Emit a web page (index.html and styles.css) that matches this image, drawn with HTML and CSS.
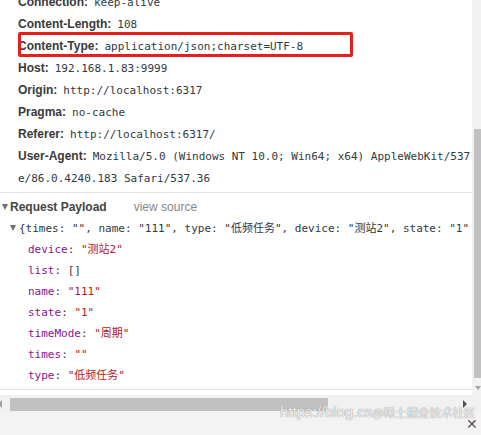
FILE: index.html
```html
<!DOCTYPE html>
<html lang="en">
<head>
  <meta charset="UTF-8" />
  <meta name="viewport" content="width=device-width, initial-scale=1.0" />
  <title>Request Headers</title>
  <link rel="stylesheet" href="styles.css">
</head>
<body>
  <div class="devtools">
    <div class="panel">
      <div class="body">
        <ul class="headers">
          <li><span class="name">Connection:</span><span class="value">keep-alive</span></li>
          <li><span class="name">Content-Length:</span><span class="value">108</span></li>
          <li class="marked"><span class="name">Content-Type:</span><span class="value">application/json;charset=UTF-8</span></li>
          <li><span class="name">Host:</span><span class="value">192.168.1.83:9999</span></li>
          <li><span class="name">Origin:</span><span class="value">http://localhost:6317</span></li>
          <li><span class="name">Pragma:</span><span class="value">no-cache</span></li>
          <li><span class="name">Referer:</span><span class="value">http://localhost:6317/</span></li>
          <li><span class="name">User-Agent:</span><span class="value">Mozilla/5.0 (Windows NT 10.0; Win64; x64) AppleWebKit/537.</span></li>
          <li class="wrap"><span class="value">e/86.0.4240.183 Safari/537.36</span></li>
        </ul>

        <div class="section-title">
          <span class="arrow"></span>
          <strong>Request Payload</strong>
          <span class="view-source">view source</span>
        </div>

        <div class="payload">
          <div class="preview"><span class="arrow small"></span>{times: "", name: "111", type: "低频任务", device: "测站2", state: "1"</div>
          <div class="prop"><span class="key">device</span>: <span class="str">"测站2"</span></div>
          <div class="prop"><span class="key">list</span>: []</div>
          <div class="prop"><span class="key">name</span>: <span class="str">"111"</span></div>
          <div class="prop"><span class="key">state</span>: <span class="str">"1"</span></div>
          <div class="prop"><span class="key">timeMode</span>: <span class="str">"周期"</span></div>
          <div class="prop"><span class="key">times</span>: <span class="str">""</span></div>
          <div class="prop"><span class="key">type</span>: <span class="str">"低频任务"</span></div>
        </div>
      </div>
      <div class="vscroll">
        <div class="vthumb"></div>
        <span class="down"></span>
      </div>
    </div>

    <div class="hscroll">
      <span class="left"></span>
      <div class="track"><div class="hthumb"></div></div>
      <span class="right"></span>
    </div>

    <div class="footer">
      <span class="close">✕</span>
    </div>

    <div class="watermark"><span class="url">https://blog.cs</span><span class="site">@稀土掘金技术社区</span></div>
  </div>
</body>
</html>
```

FILE: styles.css
```css
html, body {
  margin: 0;
  padding: 0;
  background: #fff;
}
.devtools {
  position: relative;
  width: 481px;
  height: 435px;
  overflow: hidden;
  font-family: "Liberation Sans", Arial, sans-serif;
  font-size: 12px;
  color: #333;
}
.panel {
  display: grid;
  grid-template-columns: 472px 9px;
  height: 395px;
}
.body {
  overflow: hidden;
  white-space: nowrap;
}
.headers {
  list-style: none;
  margin: -9px 0 0;
  padding: 0 0 3px 18px;
  border-bottom: 1px solid #e3e3e3;
}
.headers li {
  height: 22px;
  line-height: 22px;
}
.headers .name {
  font-weight: bold;
  margin-right: 6px;
  color: #3a3a3a;
}
.headers .value {
  font-family: "DejaVu Sans Mono", "Liberation Mono", "Noto Sans CJK SC", monospace;
  font-size: 11px;
  color: #303942;
}
.marked {
  position: relative;
}
.marked::after {
  content: "";
  position: absolute;
  left: 0;
  top: -3px;
  width: 329px;
  height: 19px;
  border: 3px solid #e5201b;
  border-radius: 2px;
}
.section-title {
  height: 22px;
  line-height: 22px;
  padding-top: 3px;
  display: flex;
  align-items: center;
}
.section-title strong {
  color: #444;
  margin-left: 2px;
}
.view-source {
  margin-left: 27px;
  color: #888;
}
.arrow {
  display: inline-block;
  width: 0;
  height: 0;
  margin-left: 2px;
  border-left: 3.5px solid transparent;
  border-right: 3.5px solid transparent;
  border-top: 6px solid #6e6e6e;
}
.arrow.small {
  margin: 0 3px 1px 10px;
  border-left-width: 3px;
  border-right-width: 3px;
  border-top-width: 6px;
}
.payload {
  padding-bottom: 3px;
  border-bottom: 1px solid #e3e3e3;
  font-family: "DejaVu Sans Mono", "Liberation Mono", "Noto Sans CJK SC", monospace;
  font-size: 11px;
  color: #303942;
}
.preview, .prop {
  height: 21px;
  line-height: 21px;
}
.prop {
  padding-left: 28px;
}
.key {
  color: #881391;
}
.str {
  color: #b3211a;
}
.vscroll {
  position: relative;
  background: #f1f1f1;
}
.vthumb {
  margin: 129px 0 0 2px;
  height: 249px;
  background: #c1c1c1;
}
.down {
  position: absolute;
  left: 3px;
  top: 386px;
  border-left: 3px solid transparent;
  border-right: 3px solid transparent;
  border-top: 4px solid #a3a3a3;
}
.hscroll {
  display: flex;
  align-items: center;
  height: 18px;
  background: #f1f1f1;
}
.left {
  margin-left: -2px;
  border-top: 4px solid transparent;
  border-bottom: 4px solid transparent;
  border-right: 4px solid #a0a0a0;
}
.track {
  flex: 1;
  padding: 0 0 0 8px;
}
.hthumb {
  width: 318px;
  height: 13px;
  background: #c1c1c1;
}
.right {
  margin-right: 14px;
  border-top: 4px solid transparent;
  border-bottom: 4px solid transparent;
  border-left: 4px solid #505050;
}
.footer {
  height: 22px;
  background: #f3f3f3;
  display: flex;
  justify-content: flex-end;
  align-items: center;
}
.close {
  margin-right: 3px;
  font-size: 14px;
  color: #555;
}
.watermark {
  position: absolute;
  left: 280px;
  top: 403px;
  display: flex;
  align-items: baseline;
  color: rgba(255, 255, 255, 0.85);
  text-shadow: 0 0 1px #999, 0 0 1px #999;
  white-space: nowrap;
}
.url {
  font-size: 15px;
  font-family: "Liberation Sans", Arial, sans-serif;
}
.site {
  font-size: 11.5px;
  font-family: "Noto Sans CJK SC", sans-serif;
}
```
